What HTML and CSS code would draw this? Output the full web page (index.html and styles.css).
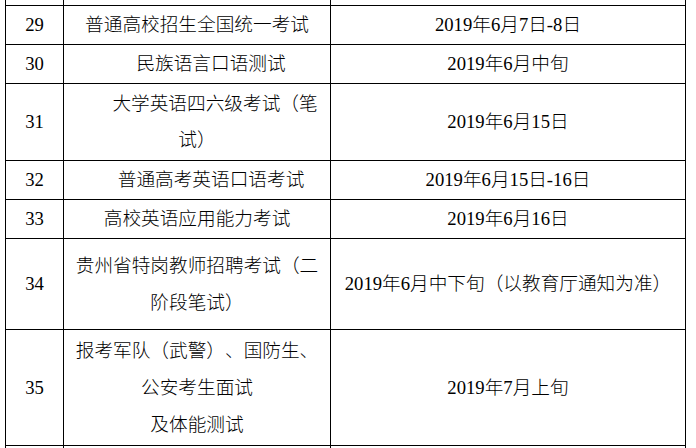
FILE: index.html
```html
<!DOCTYPE html>
<html lang="zh-CN">
<head>
<meta charset="utf-8">
<title>2019年考试时间安排</title>
<link rel="stylesheet" href="styles.css">
</head>
<body>
<div class="sheet">
  <div class="grid">
    <div class="cell"></div><div class="cell"></div><div class="cell"></div>

    <div class="cell num"><p class="txt">29</p></div>
    <div class="cell name"><p class="txt">普通高校招生全国统一考试</p></div>
    <div class="cell date"><p class="txt">2019年6月7日-8日</p></div>

    <div class="cell num"><p class="txt">30</p></div>
    <div class="cell name"><p class="txt indent">民族语言口语测试</p></div>
    <div class="cell date"><p class="txt">2019年6月中旬</p></div>

    <div class="cell num"><p class="txt">31</p></div>
    <div class="cell name"><p class="txt indent-wide">大学英语四六级考试（笔<br>试）</p></div>
    <div class="cell date"><p class="txt">2019年6月15日</p></div>

    <div class="cell num"><p class="txt">32</p></div>
    <div class="cell name"><p class="txt indent">普通高考英语口语考试</p></div>
    <div class="cell date"><p class="txt">2019年6月15日-16日</p></div>

    <div class="cell num"><p class="txt">33</p></div>
    <div class="cell name"><p class="txt">高校英语应用能力考试</p></div>
    <div class="cell date"><p class="txt">2019年6月16日</p></div>

    <div class="cell num"><p class="txt">34</p></div>
    <div class="cell name"><p class="txt tall">贵州省特岗教师招聘考试（二<br>阶段笔试）</p></div>
    <div class="cell date"><p class="txt">2019年6月中下旬（以教育厅通知为准）</p></div>

    <div class="cell num"><p class="txt">35</p></div>
    <div class="cell name"><p class="txt tall">报考军队（武警）、国防生、<br>公安考生面试<br>及体能测试</p></div>
    <div class="cell date"><p class="txt">2019年7月上旬</p></div>

    <div class="cell"></div><div class="cell"></div><div class="cell"></div>
  </div>
</div>
</body>
</html>
```
FILE: styles.css
```css
html, body {
  margin: 0;
  padding: 0;
  background: #fff;
  overflow: hidden;
}

.sheet {
  padding-left: 5px;
  font-family: "Liberation Serif", "Noto Sans CJK SC", serif;
  font-size: 18.67px;
  font-weight: 300;
  color: #000;
  text-spacing-trim: space-all;
}

.grid {
  display: grid;
  width: max-content;
  grid-template-columns: 57px 266px 354px;
  grid-template-rows: 5px 38px 38px 76px 38px 38px 90px 115px 2px;
  gap: 1px;
  padding: 0 1px;
  background: #000;
}

.cell {
  background: #fff;
  display: flex;
  align-items: center;
  overflow: hidden;
}

.txt {
  margin: 0;
  width: 100%;
  text-align: center;
  line-height: 36px;
  white-space: nowrap;
}

.name .txt {
  padding: 0 7px;
  box-sizing: border-box;
}

.indent {
  text-indent: 28px;
}

.indent-wide {
  text-indent: 36px;
}

.tall {
  line-height: 37px;
}
```
